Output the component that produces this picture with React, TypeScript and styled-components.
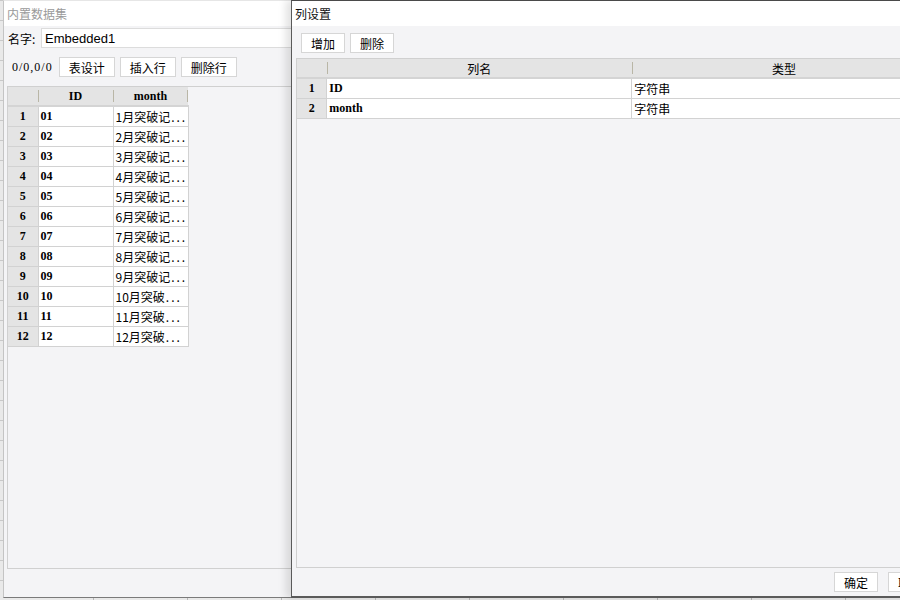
import React from 'react';
import styled, { createGlobalStyle } from 'styled-components';

const GlobalStyle = createGlobalStyle`
  html, body {
    margin: 0;
    padding: 0;
    overflow: hidden;
  }
  body {
    font-family: "Noto Sans CJK SC", "Liberation Sans", sans-serif;
    font-size: 12px;
    color: #000;
  }
`;

const cjk = `"Noto Sans CJK SC", "Liberation Sans", sans-serif`;
const serif = `"Liberation Serif", "Noto Sans CJK SC", serif`;

const Desktop = styled.div`
  position: relative;
  width: 900px;
  height: 600px;
  overflow: hidden;
  background-color: #e9e9e9;
  background-image:
    repeating-linear-gradient(90deg, transparent 0 93px, #b8b8b8 93px 94px),
    repeating-linear-gradient(0deg, transparent 0 19px, #c8c8c8 19px 20px);
`;

const Window = styled.div<{ $left: number; $width: number; $z: number; $active?: boolean }>`
  position: absolute;
  top: 0;
  left: ${(p) => p.$left}px;
  width: ${(p) => p.$width}px;
  height: 598px;
  z-index: ${(p) => p.$z};
  display: flex;
  flex-direction: column;
  background: #f4f4f6;
  box-sizing: border-box;
  border-left: 1px solid ${(p) => (p.$active ? '#5a5a5a' : '#c4c4c4')};
  border-top: 1px solid ${(p) => (p.$active ? '#4a4a4a' : '#e6e6e6')};
  border-bottom: ${(p) => (p.$active ? '2px solid #5a5a5a' : '1px solid #7a7a7a')};
  box-shadow: ${(p) => (p.$active ? '-5px 0 8px rgba(0, 0, 0, 0.12)' : 'none')};
`;

const TitleBar = styled.div<{ $muted?: boolean }>`
  height: 25px;
  flex: none;
  display: flex;
  align-items: center;
  padding-left: 3px;
  background: #fff;
  font-family: ${cjk};
  font-size: 12px;
  color: ${(p) => (p.$muted ? '#9a9a9a' : '#111')};
`;

const Body = styled.div<{ $top: number; $inset: number }>`
  flex: 1;
  display: flex;
  flex-direction: column;
  padding: ${(p) => p.$top}px 4px 0 ${(p) => p.$inset}px;
  min-height: 0;
`;

const FieldRow = styled.div`
  display: flex;
  align-items: center;
  height: 20px;
  margin-bottom: 9px;
`;

const Label = styled.span`
  font-family: ${cjk};
  font-size: 12px;
  width: 33px;
  margin-left: 1px;
`;

const TextInput = styled.div`
  flex: 1;
  height: 20px;
  box-sizing: border-box;
  background: #fff;
  border: 1px solid #dcdcdc;
  border-right: none;
  padding-left: 3px;
  display: flex;
  align-items: center;
  font-family: "Liberation Sans", sans-serif;
  font-size: 13px;
`;

const Toolbar = styled.div<{ $gap: number; $inset: number }>`
  display: flex;
  align-items: center;
  gap: ${(p) => p.$gap}px;
  height: 20px;
  padding-left: ${(p) => p.$inset}px;
  flex: none;
`;

const Counter = styled.span`
  font-family: ${serif};
  font-size: 12px;
  margin-left: 5px;
  margin-right: 1px;
  letter-spacing: 1px;
`;

const Button = styled.div<{ $w: number; $h?: number }>`
  width: ${(p) => p.$w}px;
  height: ${(p) => p.$h ?? 20}px;
  box-sizing: border-box;
  background: #fff;
  border: 1px solid #d6d6d6;
  display: flex;
  align-items: center;
  justify-content: center;
  font-family: ${cjk};
  font-size: 12px;
  flex: none;
`;

const GridBox = styled.div<{ $top: number }>`
  flex: 1;
  margin-top: ${(p) => p.$top}px;
  border: 1px solid #d0d0d0;
  border-right: none;
  background: #f4f4f6;
  overflow: hidden;
  min-height: 0;
`;

const Table = styled.table`
  border-collapse: collapse;
  table-layout: fixed;
`;

const HeadCell = styled.th<{ $w: number; $cjk?: boolean }>`
  width: ${(p) => p.$w}px;
  height: 18px;
  padding: 0;
  background: #e4e4e4;
  font-family: ${(p) => (p.$cjk ? cjk : serif)};
  font-size: 12px;
  font-weight: ${(p) => (p.$cjk ? 'normal' : 'bold')};
  text-align: center;
  position: relative;
  border-bottom: 2px solid #d4d4d4;
  &::before,
  &:last-child::after {
    content: '';
    position: absolute;
    top: 3px;
    bottom: 3px;
    width: 1px;
    background: #b9b6a6;
  }
  &::before {
    left: 0;
  }
  &:last-child::after {
    right: 0;
  }
  &:first-child::before {
    display: none;
  }
`;

const RowHead = styled.td`
  height: 19px;
  padding: 0;
  background: #e4e4e4;
  border-bottom: 1px solid #d2d2d2;
  text-align: center;
  font-family: ${serif};
  font-size: 12px;
  font-weight: bold;
`;

const Cell = styled.td<{ $cjk?: boolean }>`
  height: 19px;
  padding: 0 0 0 2px;
  background: #fff;
  border-bottom: 1px solid #d2d2d2;
  border-left: 1px solid #d2d2d2;
  font-family: ${(p) => (p.$cjk ? cjk : serif)};
  font-size: 12px;
  font-weight: ${(p) => (p.$cjk ? 'normal' : 'bold')};
  white-space: nowrap;
  overflow: hidden;
  &:last-child {
    border-right: 1px solid #d2d2d2;
  }
`;

const Dots = styled.span`
  letter-spacing: 2px;
  margin-left: 1px;
`;

const Footer = styled.div`
  height: 28px;
  flex: none;
  display: flex;
  align-items: center;
  padding-left: 538px;
  gap: 10px;
`;

const BottomSpace = styled.div`
  height: 28px;
  flex: none;
`;

const rows = Array.from({ length: 12 }, (_, i) => {
  const n = i + 1;
  const id = String(n).padStart(2, '0');
  const month = n < 10 ? `${n}月突破记` : `${n}月突破`;
  return { n, id, month };
});

const columns = [
  { name: 'ID', type: '字符串' },
  { name: 'month', type: '字符串' },
];

const DatasetWindow: React.FC = () => (
  <Window $left={3} $width={300} $z={1}>
    <TitleBar $muted>内置数据集</TitleBar>
    <Body $top={2} $inset={3}>
      <FieldRow>
        <Label>名字:</Label>
        <TextInput>Embedded1</TextInput>
      </FieldRow>
      <Toolbar $gap={5} $inset={0}>
        <Counter>0/0,0/0</Counter>
        <Button $w={56}>表设计</Button>
        <Button $w={56}>插入行</Button>
        <Button $w={56}>删除行</Button>
      </Toolbar>
      <GridBox $top={9}>
        <Table>
          <thead>
            <tr>
              <HeadCell $w={30} />
              <HeadCell $w={75}>ID</HeadCell>
              <HeadCell $w={75}>month</HeadCell>
            </tr>
          </thead>
          <tbody>
            {rows.map((r) => (
              <tr key={r.n}>
                <RowHead>{r.n}</RowHead>
                <Cell>{r.id}</Cell>
                <Cell $cjk>
                  {r.month}
                  <Dots>...</Dots>
                </Cell>
              </tr>
            ))}
          </tbody>
        </Table>
      </GridBox>
      <BottomSpace />
    </Body>
  </Window>
);

const ColumnWindow: React.FC = () => (
  <Window $left={291} $width={650} $z={2} $active>
    <TitleBar>列设置</TitleBar>
    <Body $top={7} $inset={4}>
      <Toolbar $gap={5} $inset={5}>
        <Button $w={44}>增加</Button>
        <Button $w={44}>删除</Button>
      </Toolbar>
      <GridBox $top={5}>
        <Table>
          <thead>
            <tr>
              <HeadCell $w={30} />
              <HeadCell $w={307} $cjk>
                列名
              </HeadCell>
              <HeadCell $w={307} $cjk>
                类型
              </HeadCell>
            </tr>
          </thead>
          <tbody>
            {columns.map((c, i) => (
              <tr key={c.name}>
                <RowHead>{i + 1}</RowHead>
                <Cell>{c.name}</Cell>
                <Cell $cjk>{c.type}</Cell>
              </tr>
            ))}
          </tbody>
        </Table>
      </GridBox>
      <Footer>
        <Button $w={44} $h={20}>
          确定
        </Button>
        <Button $w={44} $h={20}>
          取消
        </Button>
      </Footer>
    </Body>
  </Window>
);

const App: React.FC = () => (
  <>
    <GlobalStyle />
    <Desktop>
      <DatasetWindow />
      <ColumnWindow />
    </Desktop>
  </>
);

export default App;
